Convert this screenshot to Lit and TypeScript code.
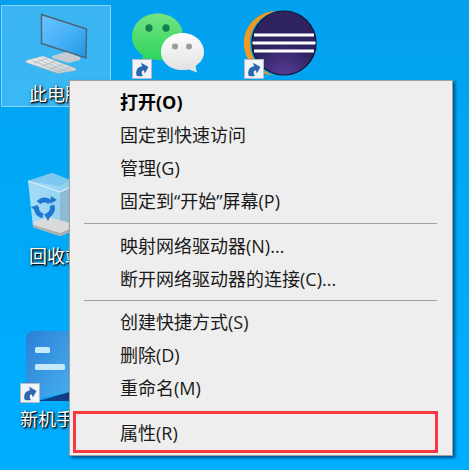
import { LitElement, html, css, svg } from "lit";
import { customElement } from "lit/decorators.js";

const shortcut = (cls: string) => html`<svg class="shortcut ${cls}" viewBox="0 0 20 20" width="20" height="20">
  <rect x="0.5" y="0.5" width="19" height="19" fill="#f1f4f7" stroke="#b4bcc3"/>
  <path d="M4.500 16.500 C3.500 11.500 5.500 8 10 7.200 L9.200 3.800 L16.500 8 L12.800 14.500 L11.800 11.200 C9.500 11.200 9 14 11 17 C8.500 17.500 5.500 17.500 4.500 16.500Z" fill="#2e65b2"/>
</svg>`;

const computer = svg`<svg class="ico" style="left:24px;top:12px" width="64" height="62" viewBox="0 0 64 62">
  <defs>
    <linearGradient id="scr" x1="0" y1="0" x2="1" y2="1"><stop offset="0" stop-color="#6cc4ff"/><stop offset="0.5" stop-color="#49b2f8"/><stop offset="1" stop-color="#1e96e4"/></linearGradient>
    <linearGradient id="kb" x1="0" y1="0" x2="0" y2="1"><stop offset="0" stop-color="#f4f6f7"/><stop offset="1" stop-color="#c8ced2"/></linearGradient>
  </defs>
  <path d="M46 38 L50 39 L50.500 46 L45 46Z" fill="#c9d2d7"/>
  <path d="M17.500 2.500 L62.500 17 L62 46 L17.500 31.500Z" fill="url(#scr)" stroke="#50626f" stroke-width="1.400"/>
  <path d="M28 44 L42 40 L56 45 L56 48 L45 51 L28 46Z" fill="#c4ccd1"/>
  <path d="M2 48.500 L19 44 L52 56.500 L52 58.500 L34 61.500 L2 50.500Z" fill="url(#kb)" stroke="#9aa6ad" stroke-width="0.500"/>
  <g stroke="#a3aeb5" stroke-width="0.600"><path d="M7 48 L37 60M12 46.500 L42 59M17 45.500 L47 58"/><path d="M10 51 L24 46M18 54 L32 49M26 57 L40 52M34 60 L47 55"/></g>
</svg>`;

const wechat = svg`<svg class="ico" style="left:131px;top:12px" width="74" height="62" viewBox="0 0 74 62">
  <defs>
    <linearGradient id="g1" x1="0" y1="0" x2="0" y2="1"><stop offset="0" stop-color="#72e482"/><stop offset="1" stop-color="#2cd35c"/></linearGradient>
    <linearGradient id="g2" x1="0" y1="0" x2="0" y2="1"><stop offset="0" stop-color="#fdfdfd"/><stop offset="1" stop-color="#dfe1e1"/></linearGradient>
  </defs>
  <path d="M27 1.500 C12 1.500 1 12 1 25 C1 33 6 39.500 12 43.500 L10 50 L18 46.500 C22 47.500 25 48.200 30 48 C44 47 52 36 52 24 C52 11 41 1.500 27 1.500Z" fill="url(#g1)"/>
  <ellipse cx="18" cy="16" rx="3.600" ry="3.800" fill="#13824a"/><ellipse cx="35" cy="16" rx="3.600" ry="3.800" fill="#13824a"/>
  <path d="M51.500 21 C39 21 30 30 30 40 C30 50 39 58 51 58 C54 58 56 58 58 57.500 L66 60.500 L64.500 54 C70 50 73 46 73 40 C73 30 64 21 51.500 21Z" fill="url(#g2)"/>
  <circle cx="44" cy="34.500" r="3" fill="#9b9b9b"/><circle cx="58" cy="34.500" r="3" fill="#9b9b9b"/>
</svg>`;

const eclipse = svg`<svg class="ico" style="left:243px;top:10px" width="76" height="66" viewBox="0 0 76 66">
  <defs>
    <radialGradient id="e1" cx="0.5" cy="1.05" r="0.55"><stop offset="0" stop-color="#5c3f9c"/><stop offset="1" stop-color="#2e2260"/></radialGradient>
  </defs>
  <path d="M33 1 C14 2 1 16 1 33 C1 50 13 63 31 66 C16 60 7 48 7 33 C7 18 17 6 33 1Z" fill="#f39a1c"/>
  <circle cx="41" cy="33" r="32" fill="url(#e1)" stroke="#10142a" stroke-width="1.200"/>
  <path d="M11 25h60M9.500 33h63M11 41h60" stroke="#fff" stroke-width="3" fill="none"/>
</svg>`;

const bin = svg`<svg class="ico" style="left:27px;top:172px" width="43" height="66" viewBox="0 0 43 66">
  <defs>
    <linearGradient id="b1" x1="0" y1="0" x2="1" y2="0"><stop offset="0" stop-color="#a4dcf7"/><stop offset="1" stop-color="#92d0f0"/></linearGradient>
  </defs>
  <path d="M1 9 L25 1 L43 8 L43 60 L33 64 L6 55Z" fill="url(#b1)"/>
  <path d="M33 20 L43 16 L43 60 L33 64Z" fill="#8dbbd3"/>
  <path d="M1 9 L25 1 L43 8 L33 14 Z" fill="#7cc8ef"/>
  <path d="M1 9 L33 20 L43 15" stroke="#d6eefa" stroke-width="1.200" fill="none"/>
  <path d="M6 50 L22 45 L43 51 L43 60 L33 64 L6 55Z" fill="#d9dadb"/>
  <path d="M6 53 L6 55 L33 64 L43 60 L43 57 L33 61Z" fill="#a9adb0"/>
  <g transform="rotate(-20 17.500 36)">
    <ellipse cx="17.500" cy="36" rx="8" ry="8" fill="none" stroke="#1f78d0" stroke-width="5" stroke-dasharray="12.500 4.300"/>
  </g>
  <path d="M24 24 L30 28 L23 32Z M4 35 L11 33 L11 41Z M21 49 L17 42 L25 41Z" fill="#1f78d0"/>
</svg>`;

const guide = svg`<svg class="ico" style="left:26px;top:331px" width="44" height="70" viewBox="0 0 44 70">
  <defs>
    <linearGradient id="n1" x1="0" y1="0" x2="1" y2="1"><stop offset="0" stop-color="#2c7fd6"/><stop offset="1" stop-color="#47b0ee"/></linearGradient>
  </defs>
  <path d="M8 0 H44 V61 L0 70 V8 Q0 0 8 0Z" fill="url(#n1)"/>
  <path d="M12 70 L44 61 V70Z" fill="#123c86"/>
  <rect x="9" y="16" width="15" height="6" rx="1.500" fill="#c4e9fb"/>
  <rect x="9" y="33" width="30" height="6" rx="1.500" fill="#c4e9fb"/>
</svg>`;

const groups: { t: string; b?: boolean }[][] = [
  [{ t: "打开(O)", b: true }, { t: "固定到快速访问" }, { t: "管理(G)" }, { t: "固定到“开始”屏幕(P)" }],
  [{ t: "映射网络驱动器(N)..." }, { t: "断开网络驱动器的连接(C)..." }],
  [{ t: "创建快捷方式(S)" }, { t: "删除(D)" }, { t: "重命名(M)" }],
  [{ t: "属性(R)" }],
];
const sepClass = ["", "sep-a", "sep-b", "sep-c"];

@customElement("app-root")
export class AppRoot extends LitElement {
  static styles = css`
    :host {
      display: block;
      width: 469px;
      height: 470px;
      overflow: hidden;
    }
    .desk {
      position: relative;
      width: 469px;
      height: 470px;
      overflow: hidden;
      background: linear-gradient(180deg, #03a0ee 0%, #00a8f6 40%, #00aeff 100%);
      font-family: "Open Sans", "Noto Sans CJK SC", sans-serif;
    }
    .sel {
      position: absolute;
      left: 1px;
      top: 5px;
      width: 110px;
      height: 102px;
      box-sizing: border-box;
      background: rgba(255, 255, 255, 0.22);
      border: 1px solid rgba(255, 255, 255, 0.4);
    }
    .ico { position: absolute; display: block; }
    .shortcut { position: absolute; display: block; }
    .s1 { left: 132px; top: 59px; }
    .s2 { left: 244px; top: 59px; }
    .s3 { left: 20px; top: 383px; }
    .label {
      position: absolute;
      color: #fff;
      font-size: 18px;
      line-height: 24px;
      white-space: nowrap;
      text-shadow: 1px 1px 1px #000, 1px 1px 3px rgba(0,0,0,.9);
    }
    .l1 { left: 29px; top: 82px; }
    .l2 { left: 29px; top: 244px; }
    .l3 { left: 20px; top: 407px; }
    .menu {
      position: absolute;
      left: 69px;
      top: 80px;
      width: 384px;
      box-sizing: border-box;
      padding: 6px 3px 4px 2px;
      background: #eeeeee;
      border: 1px solid #a0a0a0;
      box-shadow: 2px 2px 3px rgba(0, 0, 40, 0.55);
      color: #1a1a1a;
    }
    .item {
      height: 33px;
      display: flex;
      align-items: center;
      padding-left: 48px;
      font-size: 18px;
      line-height: 30px;
      padding-bottom: 3px;
      box-sizing: border-box;
      white-space: nowrap;
    }
    .b { font-weight: 700; color: #000; }
    .sep {
      height: 1px;
      margin-left: 12px;
      margin-right: 12px;
      background: #a0a0a0;
    }
    .sep-a { margin-top: 4px; margin-bottom: 7px; }
    .sep-b { margin-top: 3px; margin-bottom: 6px; }
    .sep-c { margin-top: 5px; margin-bottom: 6px; }
    .group { display: flex; flex-direction: column; }
    .hl {
      position: absolute;
      left: 73px;
      top: 411px;
      width: 365px;
      height: 42px;
      box-sizing: border-box;
      border: 3px solid #f73a3f;
    }
  `;

  render() {
    return html`<div class="desk">
      <div class="sel"></div>
      ${computer}${wechat}${eclipse}${bin}${guide}
      ${shortcut("s1")}${shortcut("s2")}${shortcut("s3")}
      <div class="label l1">此电脑</div>
      <div class="label l2">回收站</div>
      <div class="label l3">新机手册</div>
      <div class="menu">
        ${groups.map(
          (g, i) => html`
            ${i > 0 ? html`<div class="sep ${sepClass[i]}"></div>` : ""}
            <div class="group">
              ${g.map((e) => html`<div class="item ${e.b ? "b" : ""}">${e.t}</div>`)}
            </div>
          `
        )}
      </div>
      <div class="hl"></div>
    </div>`;
  }
}
